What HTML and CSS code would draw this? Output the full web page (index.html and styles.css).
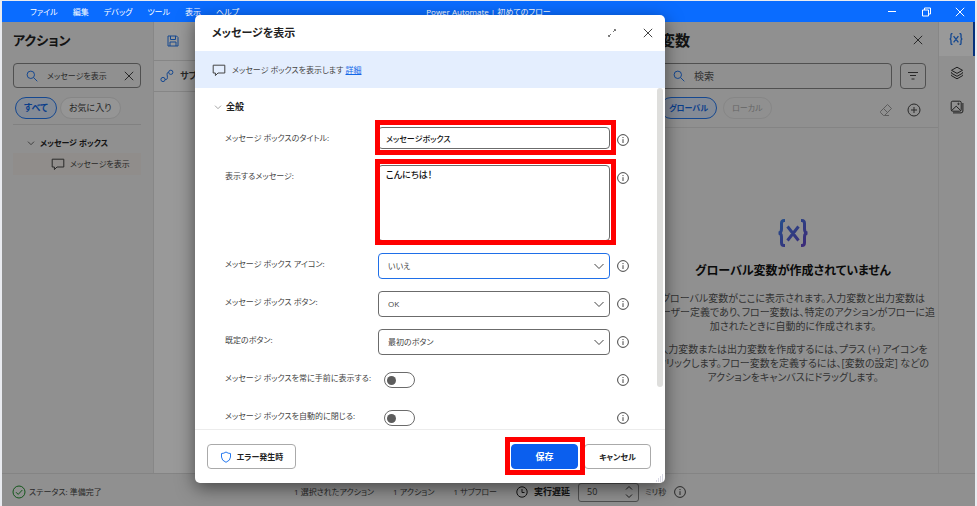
FILE: index.html
```html
<!DOCTYPE html>
<html lang="ja">
<head>
<meta charset="utf-8">
<title>Power Automate | 初めてのフロー</title>
<link rel="stylesheet" href="styles.css">
</head>
<body>
<svg class="defs" aria-hidden="true">
  <symbol id="i-search" viewBox="0 0 12 12"><circle cx="4.8" cy="4.8" r="3.7"/><path d="M7.6 7.6 11.3 11.3"/></symbol>
  <symbol id="i-close" viewBox="0 0 12 12"><path d="M1.8 1.8 10.2 10.2M10.2 1.8 1.8 10.2"/></symbol>
  <symbol id="i-down" viewBox="0 0 12 12"><path d="M1.5 4 6 8.5 10.5 4"/></symbol>
  <symbol id="i-chat" viewBox="0 0 14 14"><path d="M1.2 2.2H12.8V10H6L3.4 12.6V10H1.2Z"/></symbol>
  <symbol id="i-info" viewBox="0 0 12 12"><circle cx="6" cy="6" r="5.4"/><path d="M6 5.2V9M6 3V4.1"/></symbol>
  <symbol id="i-var" viewBox="0 0 32 28"><path d="M8 1.5H7Q4.500 1.500 4.500 4.500V10Q4.500 14 1.500 14Q4.500 14 4.500 18V23.500Q4.500 26.500 7 26.500H8M24 1.500H25Q27.500 1.500 27.500 4.500V10Q27.500 14 30.500 14Q27.500 14 27.500 18V23.500Q27.500 26.500 25 26.500H24M10.500 7.500 21.500 21.500M21.500 7.500 10.500 21.500"/></symbol>
</svg>
<div class="app">
  <header class="titlebar">
    <nav class="menu">
      <a href="#">ファイル</a><a href="#">編集</a><a href="#">デバッグ</a><a href="#">ツール</a><a href="#">表示</a><a href="#">ヘルプ</a>
    </nav>
    <span class="app-title">Power Automate | 初めてのフロー</span>
    <div class="window-buttons">
      <button aria-label="最小化"><svg class="icon" viewBox="0 0 12 12"><path d="M2 5.500H10"/></svg></button>
      <button aria-label="元に戻す"><svg class="icon" viewBox="0 0 12 12"><path d="M2.500 4H8.500V10H2.500ZM4.500 4V2H10.500V8H8.500"/></svg></button>
      <button aria-label="閉じる"><svg class="icon"><use href="#i-close"/></svg></button>
    </div>
  </header>

  <div class="workspace">
    <aside class="actions">
      <h2>アクション</h2>
      <div class="search">
        <svg class="icon blue"><use href="#i-search"/></svg>
        <input type="text" aria-label="アクションの検索" value="メッセージを表示">
        <button aria-label="クリア"><svg class="icon"><use href="#i-close"/></svg></button>
      </div>
      <div class="pills">
        <button class="pill selected">すべて</button>
        <button class="pill">お気に入り</button>
      </div>
      <div class="tree">
        <button class="tree-group"><svg class="icon small"><use href="#i-down"/></svg>メッセージ ボックス</button>
        <button class="tree-item"><svg class="icon large"><use href="#i-chat"/></svg>メッセージを表示</button>
      </div>
    </aside>

    <main class="canvas">
      <div class="toolbar">
        <button aria-label="保存する"><svg class="icon blue" viewBox="0 0 12 12"><path d="M1 1H9.500L11 2.500V11H1ZM3.500 1V4.500H8.500V1M3 11V7H9V11"/></svg></button>
      </div>
      <div class="subflow">
        <svg class="icon large blue" viewBox="0 0 14 14"><circle cx="3" cy="10.500" r="2.100"/><circle cx="10.800" cy="3.300" r="2.100"/><path d="M5.100 10.500Q8 11 7.300 7Q6.500 3 8.700 3.300"/></svg>
        サブフロー
      </div>
    </main>

    <aside class="variables">
      <div class="panel-head">
        <h2>変数</h2>
        <button aria-label="変数を閉じる"><svg class="icon"><use href="#i-close"/></svg></button>
      </div>
      <div class="search-row">
        <div class="search">
          <svg class="icon blue"><use href="#i-search"/></svg>
          <input type="text" aria-label="変数の検索" placeholder="検索">
        </div>
        <button class="filter" aria-label="フィルター"><svg class="icon" viewBox="0 0 12 12"><path d="M1 2.500H11M3 5.500H9M4.500 9H7.500"/></svg></button>
      </div>
      <div class="scope">
        <button class="pill selected">グローバル</button>
        <button class="pill disabled" disabled>ローカル</button>
        <div class="scope-tools">
          <button disabled aria-label="消去"><svg class="icon large" viewBox="0 0 14 14"><path d="M1.500 8.500 8.500 1.500 12.500 5.500 5.500 12.500H4.500L1.500 9.500ZM4.500 5.500 8.500 9.500M5.500 12.500H10"/></svg></button>
          <button aria-label="追加"><svg class="icon large" viewBox="0 0 14 14"><circle cx="7" cy="7" r="6"/><path d="M7 4V10M4 7H10"/></svg></button>
        </div>
      </div>
      <div class="empty">
        <svg class="empty-icon" viewBox="0 0 32 28"><defs><linearGradient id="violet" x1="0" y1="0" x2="1" y2="1"><stop offset="0" stop-color="#3d82e8"/><stop offset="1" stop-color="#6544c8"/></linearGradient></defs><use href="#i-var" stroke="url(#violet)"/></svg>
        <h3>グローバル変数が作成されていません</h3>
        <p>グローバル変数がここに表示されます。入力変数と出力変数は<br>ユーザー定義であり、フロー変数は、特定のアクションがフローに追<br>加されたときに自動的に作成されます。</p>
        <p>入力変数または出力変数を作成するには、プラス (+) アイコンを<br>クリックします。フロー変数を定義するには、[変数の設定] などの<br>アクションをキャンバスにドラッグします。</p>
      </div>
    </aside>

    <nav class="rail">
      <button class="active" aria-label="変数"><svg class="icon large blue thick" viewBox="0 0 32 28"><use href="#i-var"/></svg></button>
      <button aria-label="UI 要素"><svg class="icon large" viewBox="0 0 14 14"><path d="M7 1.200 12.500 4.300 7 7.400 1.500 4.300ZM1.500 6.300V7.200L7 10.300 12.500 7.200V6.300M1.500 8.800V9.700L7 12.800 12.500 9.700V8.800"/></svg></button>
      <button aria-label="画像"><svg class="icon large" viewBox="0 0 14 14"><rect x="1.200" y="1.200" width="10" height="10" rx="1.500"/><path d="M1.700 10.500 6.200 6.200 10.700 10.500M12.900 3V11Q12.900 12.900 11 12.900H3"/><circle cx="8.500" cy="3.900" r=".7"/></svg></button>
    </nav>
  </div>

  <footer class="statusbar">
    <span class="state"><svg class="icon large green" viewBox="0 0 14 14"><circle cx="7" cy="7" r="6"/><path d="M4 7.200 6.200 9.400 10.300 5"/></svg>ステータス: 準備完了</span>
    <span class="count">1 選択されたアクション</span>
    <span class="count">1 アクション</span>
    <span class="count">1 サブフロー</span>
    <label class="delay" for="delay"><svg class="icon" viewBox="0 0 12 12"><circle cx="6" cy="6" r="5.200"/><path d="M6 3V6.500H8.500"/></svg>実行遅延</label>
    <span class="spin"><input id="delay" type="text" inputmode="numeric" value="50"><svg class="spin-arrows" viewBox="0 0 8 14"><path d="M1 4.500 4 1.500 7 4.500M1 9.500 4 12.500 7 9.500"/></svg></span>
    <span class="unit">ミリ秒</span>
    <svg class="icon"><use href="#i-info"/></svg>
  </footer>

  <div class="scrim"></div>

  <section class="dialog" role="dialog" aria-labelledby="dialog-title">
    <header class="dialog-head">
      <h1 id="dialog-title">メッセージを表示</h1>
      <button aria-label="展開"><svg class="icon expand" viewBox="0 0 12 12"><path d="M2.500 9.500 5 7M7 5 9.500 2.500M2.500 8V9.500H4M8 2.500H9.500V4"/></svg></button>
      <button aria-label="ダイアログを閉じる"><svg class="icon"><use href="#i-close"/></svg></button>
    </header>
    <div class="banner"><svg class="icon large"><use href="#i-chat"/></svg><span>メッセージ ボックスを表示します <a href="#">詳細</a></span></div>
    <div class="dialog-body">
      <button class="section"><svg class="icon small"><use href="#i-down"/></svg>全般</button>
      <div class="row">
        <label for="f-title">メッセージ ボックスのタイトル:</label>
        <span class="control marked"><input id="f-title" type="text" value="メッセージボックス"></span>
        <svg class="icon"><use href="#i-info"/></svg>
      </div>
      <div class="row">
        <label for="f-message">表示するメッセージ:</label>
        <span class="control marked"><textarea id="f-message">こんにちは！</textarea></span>
        <svg class="icon"><use href="#i-info"/></svg>
      </div>
      <div class="row">
        <label for="f-icon">メッセージ ボックス アイコン:</label>
        <span class="control"><select id="f-icon" class="focused"><option>いいえ</option></select><svg class="icon chevron"><use href="#i-down"/></svg></span>
        <svg class="icon"><use href="#i-info"/></svg>
      </div>
      <div class="row">
        <label for="f-buttons">メッセージ ボックス ボタン:</label>
        <span class="control"><select id="f-buttons"><option>OK</option></select><svg class="icon chevron"><use href="#i-down"/></svg></span>
        <svg class="icon"><use href="#i-info"/></svg>
      </div>
      <div class="row">
        <label for="f-default">既定のボタン:</label>
        <span class="control"><select id="f-default"><option>最初のボタン</option></select><svg class="icon chevron"><use href="#i-down"/></svg></span>
        <svg class="icon"><use href="#i-info"/></svg>
      </div>
      <div class="row">
        <label for="f-top">メッセージ ボックスを常に手前に表示する:</label>
        <span class="control"><input id="f-top" class="toggle" type="checkbox" role="switch"></span>
        <svg class="icon"><use href="#i-info"/></svg>
      </div>
      <div class="row">
        <label for="f-close">メッセージ ボックスを自動的に閉じる:</label>
        <span class="control"><input id="f-close" class="toggle" type="checkbox" role="switch"></span>
        <svg class="icon"><use href="#i-info"/></svg>
      </div>
      <span class="scrollbar"></span>
    </div>
    <footer class="dialog-foot">
      <button class="button on-error"><svg class="icon blue" viewBox="0 0 12 12"><path d="M6 1Q8 2.500 10.500 2.500V6Q10.500 9.500 6 11.300Q1.500 9.500 1.500 6V2.500Q4 2.500 6 1Z"/></svg>エラー発生時</button>
      <span class="save-wrap marked"><button class="button primary">保存</button></span>
      <button class="button">キャンセル</button>
      <svg class="grip" viewBox="0 0 8 8"><path d="M6 1h1M4 3h1M6 3h1M2 5h1M4 5h1M6 5h1M0 7h1M2 7h1M4 7h1M6 7h1"/></svg>
    </footer>
  </section>
</div>
</body>
</html>
```
FILE: styles.css
```css
* { box-sizing: border-box; }

body {
  margin: 0;
  background: #fff;
  color: #444;
  font: 8px/12px "Open Sans", "Noto Sans CJK JP", sans-serif;
  font-feature-settings: "palt";
}

h1, h2, h3, p { margin: 0; }

button, input, select, textarea {
  margin: 0;
  padding: 0;
  border: 0;
  background: none;
  color: inherit;
  font: inherit;
  font-feature-settings: inherit;
  outline: 0;
}

button {
  display: flex;
  align-items: center;
  justify-content: center;
  white-space: nowrap;
}

.defs { position: absolute; width: 0; height: 0; }

.icon {
  flex: none;
  display: block;
  width: 12px;
  height: 12px;
  fill: none;
  stroke: currentColor;
  stroke-width: 1;
}
.icon.small { width: 8px; height: 8px; }
.icon.large { width: 14px; height: 14px; }
.icon.blue { color: #2478f0; }
.icon.green { color: #20902c; }
.icon.thick { stroke-width: 3; }
.icon.expand { color: #777; }

.app {
  position: relative;
  display: flex;
  flex-direction: column;
  height: 100vh;
  padding: 1px 2px 0;
  background: #e9ebf0;
}

/* Title bar */
.titlebar {
  display: grid;
  grid-template-columns: 1fr auto 1fr;
  align-items: center;
  height: 21px;
  flex: none;
  background: #0a6cff;
  color: #fff;
}
.menu { display: flex; gap: 15px; padding-left: 28px; }
.menu a { color: inherit; text-decoration: none; white-space: nowrap; }
.window-buttons { display: flex; justify-content: flex-end; gap: 22px; padding-right: 9px; }

/* Workspace */
.workspace {
  display: grid;
  grid-template-columns: 152px 1fr 291px 36px;
  flex: 1;
  min-height: 0;
  background: #f0f0f0;
}

h2 { font-size: 15px; line-height: 20px; color: #222; font-weight: 600; }

.actions { padding: 8px 12px 0 11px; border-right: 1px solid #e2e2e2; }
.actions h2 { font-size: 13px; }

.search {
  display: flex;
  align-items: center;
  flex: 1;
  gap: 9px;
  height: 25px;
  padding: 0 5px 0 12px;
  border: 1px solid #858585;
  border-radius: 4px;
}
.search input { flex: 1; width: 0; min-width: 0; }
.search input::placeholder { color: #555; opacity: 1; }
.actions .search { margin-top: 13px; }

.pill {
  height: 22px;
  padding: 0 8px;
  border: 1px solid #e0e0e0;
  border-radius: 11px;
  background: #f8f8f8;
}
.pill.selected {
  border-color: #2478f0;
  background: #dce8fa;
  color: #1268e8;
  font-weight: 700;
}
.pill.disabled { background: none; color: #aaa; }
.pills { display: flex; gap: 3px; padding: 9px 2px 5px; border-bottom: 1px solid #d8d8d8; }
.pills .pill { font-size: 9px; }

.tree { padding-top: 8px; }
.tree-group { gap: 5px; height: 20px; padding-left: 14px; color: #222; font-weight: 600; }
.tree-item {
  justify-content: flex-start;
  gap: 5px;
  width: 100%;
  height: 22px;
  padding-left: 38px;
  background: #f0ece8;
}

.canvas { background: #fff; }
.toolbar { display: flex; align-items: center; height: 39px; padding-left: 13px; border-bottom: 1px solid #e0e0e0; }
.subflow {
  display: flex;
  align-items: center;
  gap: 6px;
  height: 31px;
  padding-left: 6px;
  border-bottom: 1px solid #e0e0e0;
  font-size: 9px;
  font-weight: 700;
  white-space: nowrap;
}

.variables { border-right: 1px solid #e2e2e2; }
.panel-head { display: flex; justify-content: space-between; padding: 8px 14px 13px 12px; }
.search-row { display: flex; gap: 8px; padding: 0 12px; }
.search-row .search, .filter { height: 26px; font-size: 10px; }
.filter { width: 26px; border: 1px solid #858585; border-radius: 4px; }
.scope {
  display: flex;
  align-items: center;
  gap: 6px;
  padding: 8px 17px 8px 12px;
  border-bottom: 1px solid #dcdcdc;
}
.scope-tools { display: flex; gap: 14px; margin-left: auto; padding-top: 3px; }
.scope-tools button:disabled { color: #999; }

.empty { padding-top: 91px; text-align: center; font-size: 10px; line-height: 14px; white-space: nowrap; }
.empty h3 { margin: 14px 0 10px; font-size: 12px; line-height: 20px; font-weight: 600; color: #111; }
.empty p { margin: 0 -10px 9px; color: #555; }
.empty-icon { display: block; width: 32px; height: 28px; margin: 0 auto; fill: none; stroke-width: 3; }

.rail { color: #333; }
.rail button { width: 100%; height: 34px; }
.rail .active { background: #fff; border-right: 2px solid #0a50d0; }

/* Status bar */
.statusbar {
  display: flex;
  align-items: center;
  flex: none;
  height: 33px;
  padding: 4px 12px 0 10px;
  border-top: 1px solid #dcdcdc;
  background: #f0f0f0;
  white-space: nowrap;
}
.state { display: flex; align-items: center; gap: 3px; flex: 0 0 282px; }
.count { margin-right: 19px; }
.delay { display: flex; align-items: center; gap: 6px; margin-right: 8px; color: #222; font-size: 9px; font-weight: 700; }
.spin { display: flex; align-items: center; width: 61px; height: 19px; border: 1px solid #858585; border-radius: 3px; font-size: 9px; }
.spin input { flex: 1; width: 0; padding-left: 8px; }
.spin-arrows { width: 8px; height: 14px; margin-right: 5px; fill: none; stroke: #333; }
.unit { margin: 0 8px 0 6px; }

.scrim { position: absolute; inset: 22px 2px 0; background: rgba(0, 0, 0, .4); }

/* Dialog */
.dialog {
  position: absolute;
  inset: 15px 312px 23px 195px;
  display: flex;
  flex-direction: column;
  border-radius: 5px;
  background: #fff;
  box-shadow: 0 5px 18px rgba(0, 0, 0, .5);
}
.dialog-head { display: flex; align-items: center; gap: 24px; height: 36px; flex: none; padding: 0 11px 0 17px; }
.dialog-head h1 { flex: 1; font-size: 11px; line-height: 16px; font-weight: 600; color: #222; }
.banner {
  display: flex;
  align-items: center;
  gap: 6px;
  height: 37px;
  flex: none;
  padding-left: 17px;
  background: #e4eefe;
}
.banner a { color: #1268e8; }

.dialog-body {
  position: relative;
  flex: 1;
  min-height: 0;
  margin-bottom: 3px;
  padding: 0 36px 0 30px;
  overflow: hidden;
}
.section { gap: 4px; height: 33px; padding-top: 4px; margin-left: -11px; color: #222; font-size: 9px; font-weight: 700; }
.section .icon { color: #777; }
.row {
  display: grid;
  grid-template-columns: 153px 1fr 12px;
  align-items: start;
  min-height: 38px;
}
.row label { padding-top: 11px; white-space: nowrap; }
.row > .icon { margin-top: 13px; }
.control { position: relative; display: block; margin-right: 7px; padding: 6px 0; }
.control input[type="text"], textarea, select {
  display: block;
  width: 100%;
  border: 1px solid #6b6b6b;
  border-radius: 4px;
  background: #fff;
}
.control input[type="text"] { height: 22px; padding: 0 7px; color: #111; font-weight: 500; }
textarea { height: 76px; padding: 3px 7px; resize: none; color: #111; font-size: 9px; font-weight: 500; }
select { appearance: none; height: 26px; padding: 0 9px; }
select.focused { border-color: #1f6fe8; }
.chevron { position: absolute; right: 5px; top: 13px; }

.toggle {
  appearance: none;
  display: flex;
  align-items: center;
  width: 31px;
  height: 16px;
  margin: 5px 6px;
  padding-left: 2px;
  border: 1px solid #6b6b6b;
  border-radius: 8px;
}
.toggle::before { content: ""; width: 9px; height: 9px; border-radius: 50%; background: #5c5c5c; }

/* Red emphasis frames around highlighted controls */
.marked::after {
  content: "";
  position: absolute;
  border: 5px solid #f00;
  pointer-events: none;
}
.row .marked::after { inset: 0 -6px 2px -3px; }
.row .marked:has(input)::after { inset: -1px -6px 0 -3px; }

.scrollbar { position: absolute; top: 0; right: 2px; width: 6px; height: 299px; border-radius: 3px; background: #dededc; }

.dialog-foot {
  position: relative;
  display: flex;
  align-items: center;
  height: 54px;
  flex: none;
  padding: 0 14px 0 12px;
  border-top: 1px solid #ececec;
}
.button {
  width: 67px;
  height: 25px;
  border: 1px solid #aaa;
  border-radius: 4px;
  background: #fff;
  color: #222;
  font-weight: 600;
}
.on-error { gap: 5px; width: 89px; }
.save-wrap { position: relative; margin: 0 6px 0 auto; }
.save-wrap.marked::after { inset: -7px -7px -6px -6px; }
.primary { border-color: #0b5fee; background: #0b5fee; color: #fff; font-size: 9px; font-weight: 700; }
.grip { position: absolute; right: 1px; bottom: 1px; width: 8px; height: 8px; stroke: #b5b5cc; }
```
